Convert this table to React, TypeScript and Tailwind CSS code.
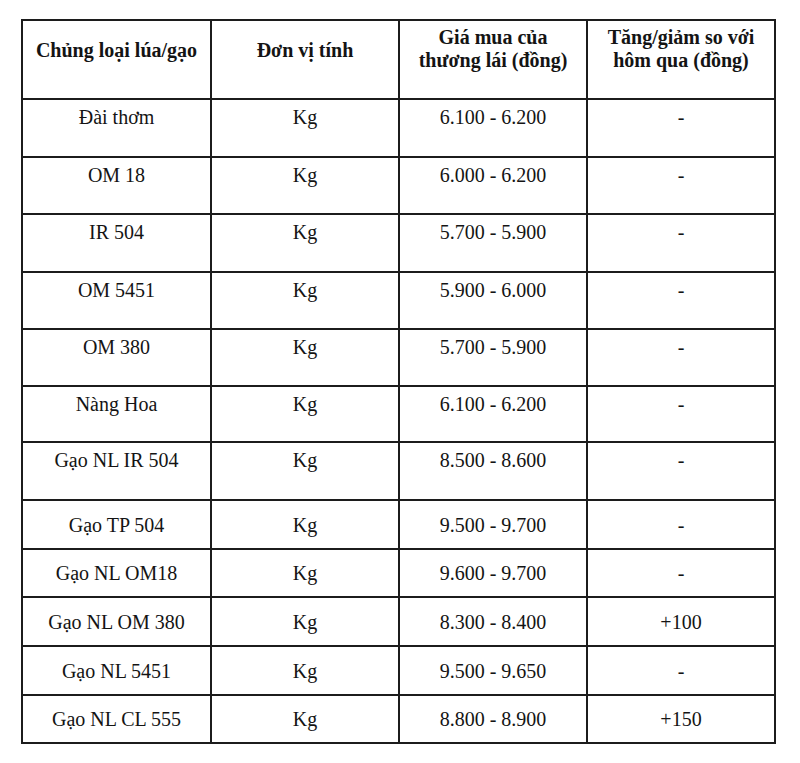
import React from "react";

type Row = { name: string; unit: string; price: string; change: string; h: string; top: boolean };

const rows: Row[] = [
  { name: "Đài thơm", unit: "Kg", price: "6.100 - 6.200", change: "-", h: "h-[58px]", top: true },
  { name: "OM 18", unit: "Kg", price: "6.000 - 6.200", change: "-", h: "h-[57px]", top: true },
  { name: "IR 504", unit: "Kg", price: "5.700 - 5.900", change: "-", h: "h-[58px]", top: true },
  { name: "OM 5451", unit: "Kg", price: "5.900 - 6.000", change: "-", h: "h-[57px]", top: true },
  { name: "OM 380", unit: "Kg", price: "5.700 - 5.900", change: "-", h: "h-[57px]", top: true },
  { name: "Nàng Hoa", unit: "Kg", price: "6.100 - 6.200", change: "-", h: "h-[56px]", top: true },
  { name: "Gạo NL IR 504", unit: "Kg", price: "8.500 - 8.600", change: "-", h: "h-[58px]", top: true },
  { name: "Gạo TP 504", unit: "Kg", price: "9.500 - 9.700", change: "-", h: "h-[49px]", top: false },
  { name: "Gạo NL OM18", unit: "Kg", price: "9.600 - 9.700", change: "-", h: "h-[48px]", top: false },
  { name: "Gạo NL OM 380", unit: "Kg", price: "8.300 - 8.400", change: "+100", h: "h-[49px]", top: false },
  { name: "Gạo NL 5451", unit: "Kg", price: "9.500 - 9.650", change: "-", h: "h-[49px]", top: false },
  { name: "Gạo NL CL 555", unit: "Kg", price: "8.800 - 8.900", change: "+150", h: "h-[48px]", top: false },
];

function Cell({ children, top }: { children: React.ReactNode; top: boolean }) {
  return (
    <div
      className={
        top
          ? "border-r-2 border-b-2 border-[#1c1c1c] pt-[5px] text-center leading-[24px]"
          : "border-r-2 border-b-2 border-[#1c1c1c] flex items-center justify-center text-center leading-[24px]"
      }
    >
      {children}
    </div>
  );
}

export default function App() {
  return (
    <div
      className="w-[800px] h-[763px] bg-white pt-[19px] pl-[21px] text-[#141414]"
      style={{ fontFamily: '"Liberation Serif", "Times New Roman", serif' }}
    >
      <div className="w-[755px] border-l-2 border-t-2 border-[#1c1c1c] text-[20px]">
        <div className="grid grid-cols-[189px_188px_188px_188px] h-[79px] font-bold">
          <div className="border-r-2 border-b-2 border-[#1c1c1c] pt-[18px] text-center leading-[23px]">
            Chủng loại lúa/gạo
          </div>
          <div className="border-r-2 border-b-2 border-[#1c1c1c] pt-[18px] text-center leading-[23px]">
            Đơn vị tính
          </div>
          <div className="border-r-2 border-b-2 border-[#1c1c1c] pt-[5px] text-center leading-[23px]">
            Giá mua của
            <br />
            thương lái (đồng)
          </div>
          <div className="border-r-2 border-b-2 border-[#1c1c1c] pt-[5px] text-center leading-[23px]">
            Tăng/giảm so với
            <br />
            hôm qua (đồng)
          </div>
        </div>
        {rows.map((r) => (
          <div key={r.name} className={"grid grid-cols-[189px_188px_188px_188px] " + r.h}>
            <Cell top={r.top}>{r.name}</Cell>
            <Cell top={r.top}>{r.unit}</Cell>
            <Cell top={r.top}>{r.price}</Cell>
            <Cell top={r.top}>{r.change}</Cell>
          </div>
        ))}
      </div>
    </div>
  );
}
